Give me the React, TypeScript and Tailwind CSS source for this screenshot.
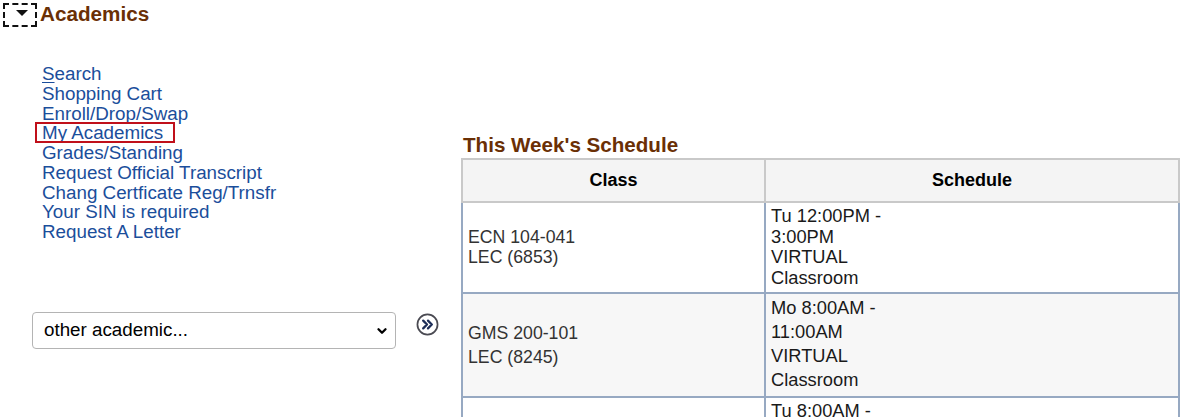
import React from 'react';
import { ChevronDown } from 'lucide-react';

const links = [
  { label: 'Search', key: 'S' },
  { label: 'Shopping Cart' },
  { label: 'Enroll/Drop/Swap' },
  { label: 'My Academics', key: 'M', boxed: true },
  { label: 'Grades/Standing' },
  { label: 'Request Official Transcript' },
  { label: 'Chang Certficate Reg/Trnsfr' },
  { label: 'Your SIN is required' },
  { label: 'Request A Letter' },
];

function NavLink({ label, accessKey, boxed }: { label: string; accessKey?: string; boxed?: boolean }) {
  const rest = accessKey ? label.slice(1) : label;
  return (
    <a href="#" className="relative block w-fit text-[#1b4e9b] no-underline">
      {accessKey && <span className="underline underline-offset-2">{accessKey}</span>}
      {rest}
      {boxed && (
        <span className="pointer-events-none absolute -left-[7px] -top-[1px] h-[21px] w-[140px] border-2 border-[#c0101a]" />
      )}
    </a>
  );
}

function GoButton() {
  return (
    <button className="mt-[1px] ml-[20px] h-[23px] w-[23px]">
      <svg viewBox="0 0 24 24" width="23" height="23">
        <circle cx="12" cy="12" r="10.5" fill="white" stroke="#4a4a52" strokeWidth="1.8" />
        <path d="M7.5 8l4 4-4 4M12.5 8l4 4-4 4" fill="none" stroke="#1c2d58" strokeWidth="2.4" strokeLinecap="round" strokeLinejoin="round" />
      </svg>
    </button>
  );
}

const rows = [
  { cls: ['ECN 104-041', 'LEC (6853)'], sched: ['Tu 12:00PM -', '3:00PM', 'VIRTUAL', 'Classroom'], bg: 'bg-white', lead: 'leading-[20.7px]', pad: 'pt-[3px] pb-[3px]' },
  { cls: ['GMS 200-101', 'LEC (8245)'], sched: ['Mo 8:00AM -', '11:00AM', 'VIRTUAL', 'Classroom'], bg: 'bg-[#f7f7f7]', lead: 'leading-[24px]', pad: 'pt-[2px] pb-[4px]' },
  { cls: ['ECN 129-011', 'LEC (6861)'], sched: ['Tu 8:00AM -', '11:00AM', 'VIRTUAL', 'Classroom'], bg: 'bg-white', lead: 'leading-[20.7px]', pad: 'pt-[3px] pb-[3px]' },
];

export default function App() {
  return (
    <div className="h-[417px] w-[1200px] overflow-hidden bg-white font-['Liberation_Sans',Arial,sans-serif]">
      <div className="flex items-start">
        <div className="ml-[3px] mt-[3px] flex h-[24px] w-[34px] justify-center border-2 border-dashed border-[#111] pt-[5px]">
          <svg width="12" height="6" viewBox="0 0 12 6" className="ml-[4px]">
            <path d="M0 0h12L6 6z" fill="#111" />
          </svg>
        </div>
        <h2 className="ml-[3px] mt-[2px] text-[20.7px] font-bold leading-[24px] text-[#6a2f05]">Academics</h2>
      </div>

      <div className="flex items-start">
        <div className="w-[461px] shrink-0 pl-[32px] pt-[37px]">
          <nav className="ml-[10px] text-[18.8px] leading-[19.75px]">
            {links.map((l) => (
              <NavLink key={l.label} label={l.label} accessKey={l.key} boxed={l.boxed} />
            ))}
          </nav>

          <div className="mt-[70px] flex items-start">
            <div className="relative">
              <select className="h-[37px] w-[364px] appearance-none rounded-[4px] border border-[#b4b4b4] bg-white pl-[11px] text-[18.8px] text-black outline-none">
                <option>other academic...</option>
              </select>
              <ChevronDown size={14} strokeWidth={4} className="pointer-events-none absolute right-[7px] top-[12px] text-black" />
            </div>
            <GoButton />
          </div>
        </div>

        <div className="w-[719px] shrink-0 pt-[106px]">
          <h3 className="mb-[1px] ml-[2px] text-[20.6px] font-bold leading-[24px] text-[#6a2f05]">This Week's Schedule</h3>
          <div className="grid grid-cols-[303px_416px]">
            <div className="flex h-[45px] items-center justify-center border-2 border-r-0 border-[#c9c9c9] bg-[#f4f4f4] text-[18px] font-bold text-black">
              Class
            </div>
            <div className="flex h-[45px] items-center justify-center border-2 border-[#c9c9c9] bg-[#f4f4f4] text-[18px] font-bold text-black">
              Schedule
            </div>
            {rows.map((r) => (
              <React.Fragment key={r.cls[0]}>
                <div className={`flex items-center border-2 border-r-0 border-t-0 border-[#97a9c2] pl-[5px] text-[17.7px] text-[#333] ${r.bg} ${r.lead}`}>
                  <div>
                    {r.cls.map((t) => (
                      <div key={t}>{t}</div>
                    ))}
                  </div>
                </div>
                <div className={`border-2 border-t-0 border-[#97a9c2] pl-[5px] text-[18.3px] text-[#1a1a1a] ${r.bg} ${r.lead} ${r.pad}`}>
                  {r.sched.map((t) => (
                    <div key={t}>{t}</div>
                  ))}
                </div>
              </React.Fragment>
            ))}
          </div>
        </div>
      </div>
    </div>
  );
}
